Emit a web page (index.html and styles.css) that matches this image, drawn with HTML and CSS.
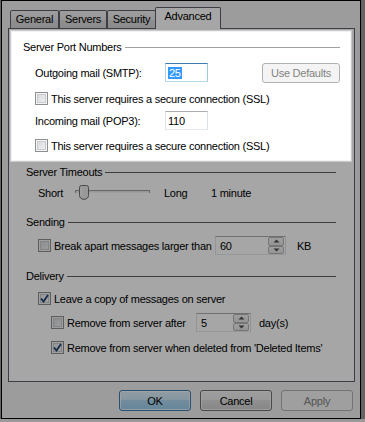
FILE: index.html
```html
<!DOCTYPE html>
<html lang="en">
<head>
    <meta charset="UTF-8">
    <meta name="viewport" content="width=device-width, initial-scale=1.0">
    <title>Account Properties - Advanced</title>
    <link rel="stylesheet" href="styles.css">
</head>
<body>
    <div class="window">
        <div class="tabs">
            <div class="tab tab-general">General</div>
            <div class="tab tab-servers">Servers</div>
            <div class="tab tab-security">Security</div>
            <div class="tab tab-advanced active">Advanced</div>
        </div>

        <div class="panel">
            <!-- highlighted group, everything else is dimmed by its shadow -->
            <div class="spotlight">
                <div class="group-title"><span>Server Port Numbers</span><i class="rule"></i></div>

                <div class="row port-row">
                    <span class="port-label">Outgoing mail (SMTP):</span>
                    <div class="textbox focused port"><span class="selected">25</span></div>
                    <button class="btn defaults" disabled>Use Defaults</button>
                </div>
                <label class="row check-row">
                    <span class="check"></span>This server requires a secure connection (SSL)
                </label>

                <div class="row port-row pop-row">
                    <span class="port-label">Incoming mail (POP3):</span>
                    <div class="textbox port">110</div>
                </div>
                <label class="row check-row">
                    <span class="check"></span>This server requires a secure connection (SSL)
                </label>
            </div>

            <div class="section">
                <div class="group-title timeouts-title"><span>Server Timeouts</span><i class="rule"></i></div>
                <div class="row slider-row">
                    <span class="slider-short">Short</span>
                    <svg class="slider" width="75" height="15" viewBox="0 0 75 15">
                        <rect x="0.5" y="5.5" width="74" height="2" fill="#e7eaea" stroke="#a0a0a0"/>
                        <line x1="1" y1="7.5" x2="74" y2="7.5" stroke="#f4f4f4"/>
                        <path d="M6.5 0.5 h5 a2 2 0 0 1 2 2 v8 c0 2.2 -2 3.8 -4.5 3.8 s-4.5 -1.6 -4.5 -3.8 v-8 a2 2 0 0 1 2 -2 z" fill="#ececec" stroke="#707070"/>
                        <line x1="6" y1="3" x2="6" y2="11" stroke="#fff"/>
                    </svg>
                    <span class="slider-long">Long</span>
                    <span>1 minute</span>
                </div>

                <div class="group-title sending-title"><span>Sending</span><i class="rule"></i></div>
                <div class="row spin-row break-row">
                    <span class="check"></span>
                    <span class="break-label">Break apart messages larger than</span>
                    <div class="textbox spin size-spin">
                        <span class="spin-value">60</span>
                        <span class="spin-buttons">
                            <span class="spin-btn"><svg width="7" height="4" viewBox="0 0 7 4"><path d="M0.5 3.5 L3.5 0.5 L6.5 3.5 Z" fill="#4d4d4d"/></svg></span>
                            <span class="spin-btn"><svg width="7" height="4" viewBox="0 0 7 4"><path d="M0.5 0.5 L3.5 3.5 L6.5 0.5 Z" fill="#4d4d4d"/></svg></span>
                        </span>
                    </div>
                    <span class="unit-kb">KB</span>
                </div>

                <div class="group-title delivery-title"><span>Delivery</span><i class="rule"></i></div>
                <label class="row check-row leave-row">
                    <span class="check checked"><svg width="9" height="9" viewBox="0 0 9 9"><path d="M1 4.5 L3.5 7.5 L8 1" fill="none" stroke="#21406e" stroke-width="1.8"/></svg></span>Leave a copy of messages on server
                </label>
                <div class="row spin-row sub-row">
                    <span class="check"></span>
                    <span class="after-label">Remove from server after</span>
                    <div class="textbox spin days-spin">
                        <span class="spin-value">5</span>
                        <span class="spin-buttons">
                            <span class="spin-btn"><svg width="7" height="4" viewBox="0 0 7 4"><path d="M0.5 3.5 L3.5 0.5 L6.5 3.5 Z" fill="#4d4d4d"/></svg></span>
                            <span class="spin-btn"><svg width="7" height="4" viewBox="0 0 7 4"><path d="M0.5 0.5 L3.5 3.5 L6.5 0.5 Z" fill="#4d4d4d"/></svg></span>
                        </span>
                    </div>
                    <span class="unit-days">day(s)</span>
                </div>
                <label class="row check-row sub-row deleted-row">
                    <span class="check checked"><svg width="9" height="9" viewBox="0 0 9 9"><path d="M1 4.5 L3.5 7.5 L8 1" fill="none" stroke="#21406e" stroke-width="1.8"/></svg></span>Remove from server when deleted from 'Deleted Items'
                </label>
            </div>
        </div>

        <div class="buttons">
            <button class="btn default">OK</button>
            <button class="btn">Cancel</button>
            <button class="btn" disabled>Apply</button>
        </div>
    </div>
</body>
</html>
```

FILE: styles.css
```css
body {
    margin: 0;
    background-color: #9a9a9a;
    font-family: "Liberation Sans", Arial, sans-serif;
    font-size: 11px;
    letter-spacing: -0.25px;
    color: #000;
}

.window {
    margin-left: 1px;
    width: 360px;
    height: 419px;
    box-sizing: border-box;
    border: 1px solid #000;
    background-color: #f0f0f0;
    padding: 6px 5px 0 6px;
}

/* tabs */

.tabs {
    display: flex;
    align-items: flex-end;
    height: 21px;
    margin-left: 2px;
}

.tab {
    position: relative;
    height: 18px;
    box-sizing: border-box;
    border: 1px solid #5f5f6b;
    border-bottom: none;
    border-radius: 2px 2px 0 0;
    background: linear-gradient(#f2f2f2, #e8e8e8 50%, #dcdcdc 50%, #d6d6d6);
    text-align: center;
    line-height: 17px;
}

.tab-general { width: 49px; }
.tab-servers { width: 48px; }
.tab-security { width: 49px; }

.tab.active {
    width: 66px;
    height: 22px;
    margin-left: -1px;
    margin-bottom: -1px;
    background: #fff;
    line-height: 17px;
}

.panel {
    height: 354px;
    box-sizing: border-box;
    border: 1px solid #5f5f6b;
    background-color: #fff;
    padding: 3px 4px 0 3px;
}

/* highlighted part */

.spotlight {
    position: relative;
    z-index: 2;
    height: 128px;
    box-sizing: border-box;
    padding: 8px 10px 0 11px;
    background-color: #fff;
    box-shadow: 0 0 0 1px rgba(255, 255, 255, 0.75),
                0 0 0 2px rgba(255, 255, 255, 0.4),
                0 0 0 800px rgba(0, 0, 0, 0.35);
}

.group-title {
    display: flex;
    align-items: center;
    height: 14px;
    gap: 3px;
    white-space: nowrap;
}

.rule {
    flex: 1;
    height: 1px;
    background-color: #5e5e5e;
}

.spotlight .rule {
    background-color: #a0a0a0;
}

.row {
    display: flex;
    align-items: center;
    padding-left: 12px;
    white-space: nowrap;
}

.port-row {
    height: 19px;
    margin-top: 9px;
}

.pop-row {
    margin-top: 6px;
}

.port-label {
    width: 130px;
}

.check-row {
    height: 13px;
    margin-top: 10px;
    gap: 3px;
}

.pop-row + .check-row {
    margin-top: 9px;
}

/* controls */

.textbox {
    height: 19px;
    box-sizing: border-box;
    border: 1px solid;
    border-color: #abadb3 #dbdfe6 #e3e9ef #e2e3ea;
    background-color: #fff;
    padding-left: 4px;
    display: flex;
    align-items: center;
}

.textbox.focused {
    border-color: #3d7bad #a4c9e3 #b7d9ed #b5cfe7;
}

.port {
    width: 43px;
    padding-left: 2px;
}

.selected {
    background-color: #3399ff;
    color: #fff;
    line-height: 12px;
    padding: 0 1px;
}

.btn {
    font-family: inherit;
    font-size: 11px;
    letter-spacing: -0.25px;
    color: #000;
    height: 21px;
    padding: 0;
    border: 1px solid #707070;
    border-radius: 3px;
    background: linear-gradient(#f2f2f2, #ebebeb 50%, #dddddd 50%, #cfcfcf);
    box-shadow: inset 0 0 0 1px rgba(255, 255, 255, 0.7);
}

.btn.default {
    border-color: #3c7fb1;
    background: linear-gradient(#dff0fa, #cce6f6 50%, #b0d8f2 50%, #9ccdec);
}

.btn:disabled {
    border-color: #adb2b5;
    background: #f4f4f4;
    color: #838383;
    box-shadow: none;
}

.defaults {
    width: 78px;
    height: 20px;
    margin-left: 54px;
}

.check {
    width: 13px;
    height: 13px;
    flex: none;
    box-sizing: border-box;
    border: 1px solid #8e8f8f;
    background: linear-gradient(135deg, #d2d4d8, #f6f6f6);
    box-shadow: inset 0 0 0 1px #f4f4f4, inset 0 0 0 2px #c9cbd0;
    display: flex;
    align-items: center;
    justify-content: center;
}

.check.checked {
    background: linear-gradient(135deg, #e2e4e8, #fbfbfb);
}

/* dimmed part */

.section {
    padding: 0 14px;
}

.timeouts-title {
    margin-top: 5px;
}

.slider-row {
    height: 15px;
    margin-top: 6px;
}

.slider-short {
    width: 37px;
}

.slider-long {
    width: 47px;
    margin-left: 14px;
}

.sending-title {
    margin-top: 15px;
}

.spin-row {
    height: 19px;
    margin-top: 7px;
}

.break-label {
    width: 161px;
    margin-left: 3px;
}

.after-label {
    width: 129px;
    margin-left: 3px;
}

.spin {
    padding-right: 1px;
    justify-content: space-between;
}

.size-spin {
    width: 71px;
}

.days-spin {
    width: 55px;
}

.spin-buttons {
    display: flex;
    flex-direction: column;
    width: 16px;
    height: 17px;
}

.spin-btn {
    flex: 1;
    display: flex;
    align-items: center;
    justify-content: center;
    box-sizing: border-box;
    border: 1px solid #b5b5b5;
    border-radius: 2px;
    background: linear-gradient(#f5f5f5, #e4e4e4);
}

.unit-kb {
    margin-left: 11px;
}

.unit-days {
    margin-left: 8px;
}

.delivery-title {
    margin-top: 14px;
}

.leave-row {
    margin-top: 9px;
}

.sub-row {
    padding-left: 25px;
}

.leave-row + .sub-row {
    margin-top: 8px;
}

.deleted-row {
    margin-top: 9px;
}

.buttons {
    display: flex;
    justify-content: flex-end;
    gap: 9px;
    margin-top: 8px;
    padding-right: 2px;
}

.buttons .btn {
    width: 72px;
}
```
